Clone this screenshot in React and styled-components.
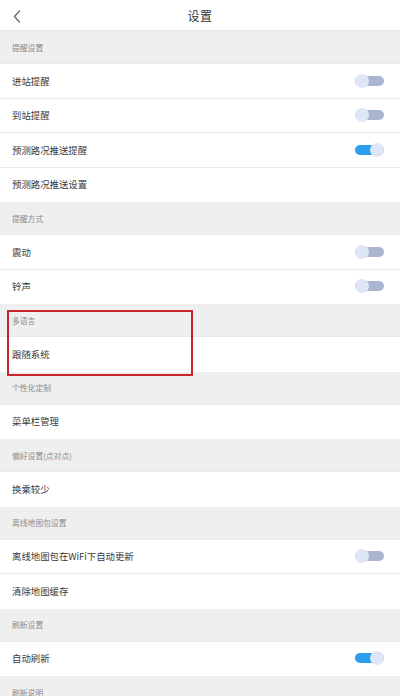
import React from 'react';
import styled, { createGlobalStyle } from 'styled-components';

const GlobalStyle = createGlobalStyle`
  html, body {
    margin: 0;
    padding: 0;
    background: #ffffff;
    font-family: "Noto Sans CJK SC", "Noto Sans", sans-serif;
  }
`;

const Page = styled.div`
  width: 400px;
  height: 696px;
  overflow: hidden;
  background: #ffffff;
`;

const Header = styled.div`
  height: 31px;
  display: flex;
  align-items: center;
  justify-content: center;
  position: relative;
  border-bottom: 1px solid #e6e6e6;
  box-sizing: border-box;
`;

const BackButton = styled.div`
  position: absolute;
  left: 11px;
  top: 8px;
  width: 12px;
  height: 16px;
  display: flex;
  align-items: center;
  justify-content: center;
`;

const Title = styled.div`
  font-size: 12px;
  color: #333333;
  letter-spacing: 0.5px;
`;

const SectionHeader = styled.div`
  height: 33px;
  display: flex;
  align-items: center;
  padding-left: 12px;
  background: #efefef;
  font-size: 7.8px;
  color: #8c8c8c;
  box-sizing: border-box;
  border-bottom: 1px solid #e9e9e9;
`;

const Row = styled.div`
  height: 34.5px;
  display: flex;
  align-items: center;
  justify-content: space-between;
  padding: 0 16px 0 12px;
  background: #ffffff;
  box-sizing: border-box;
  border-bottom: 1px solid ${({ $last }) => ($last ? 'transparent' : '#ececec')};
`;

const Label = styled.span`
  font-size: 9.4px;
  color: #3a3a3a;
`;

const Track = styled.div`
  position: relative;
  width: 29px;
  height: 14px;
  display: flex;
  align-items: center;
`;

const Rail = styled.div`
  width: 100%;
  height: 10px;
  border-radius: 5px;
  background: ${({ $on }) => ($on ? '#2c9ef0' : '#a9b5d1')};
`;

const Knob = styled.div`
  position: absolute;
  top: 0;
  ${({ $on }) => ($on ? 'right: 0;' : 'left: 0;')}
  width: 14px;
  height: 14px;
  border-radius: 50%;
  background: #dfe6f7;
`;

const Group = styled.div`
  position: relative;
`;

const Highlight = styled.div`
  position: absolute;
  z-index: 2;
  left: 7px;
  top: 6px;
  width: 186px;
  height: 66px;
  border: 2px solid #c8262c;
  box-sizing: border-box;
  pointer-events: none;
`;

function Toggle({ on }) {
  return (
    <Track>
      <Rail $on={on} />
      <Knob $on={on} />
    </Track>
  );
}

const sections = [
  {
    title: '提醒设置',
    rows: [
      { label: '进站提醒', toggle: false },
      { label: '到站提醒', toggle: false },
      { label: '预测路况推送提醒', toggle: true },
      { label: '预测路况推送设置' },
    ],
  },
  {
    title: '提醒方式',
    rows: [
      { label: '震动', toggle: false },
      { label: '铃声', toggle: false },
    ],
  },
  { title: '多语言', rows: [{ label: '跟随系统' }], highlight: true },
  { title: '个性化定制', rows: [{ label: '菜单栏管理' }] },
  { title: '偏好设置(点对点)', rows: [{ label: '换乘较少' }] },
  {
    title: '离线地图包设置',
    rows: [
      { label: '离线地图包在WiFi下自动更新', toggle: false },
      { label: '清除地图缓存' },
    ],
  },
  { title: '刷新设置', rows: [{ label: '自动刷新', toggle: true }] },
  { title: '刷新说明', rows: [] },
];

export default function App() {
  return (
    <Page>
      <GlobalStyle />
      <Header>
        <BackButton>
          <svg width="8" height="13" viewBox="0 0 8 13" fill="none">
            <path d="M6.5 1L1.5 6.5L6.5 12" stroke="#666" strokeWidth="1.3" strokeLinecap="round" strokeLinejoin="round" />
          </svg>
        </BackButton>
        <Title>设置</Title>
      </Header>
      {sections.map((s) => (
        <Group key={s.title}>
          <SectionHeader>{s.title}</SectionHeader>
          {s.rows.map((r, i) => (
            <Row key={r.label} $last={i === s.rows.length - 1}>
              <Label>{r.label}</Label>
              {r.toggle !== undefined && <Toggle on={r.toggle} />}
            </Row>
          ))}
          {s.highlight && <Highlight />}
        </Group>
      ))}
    </Page>
  );
}
